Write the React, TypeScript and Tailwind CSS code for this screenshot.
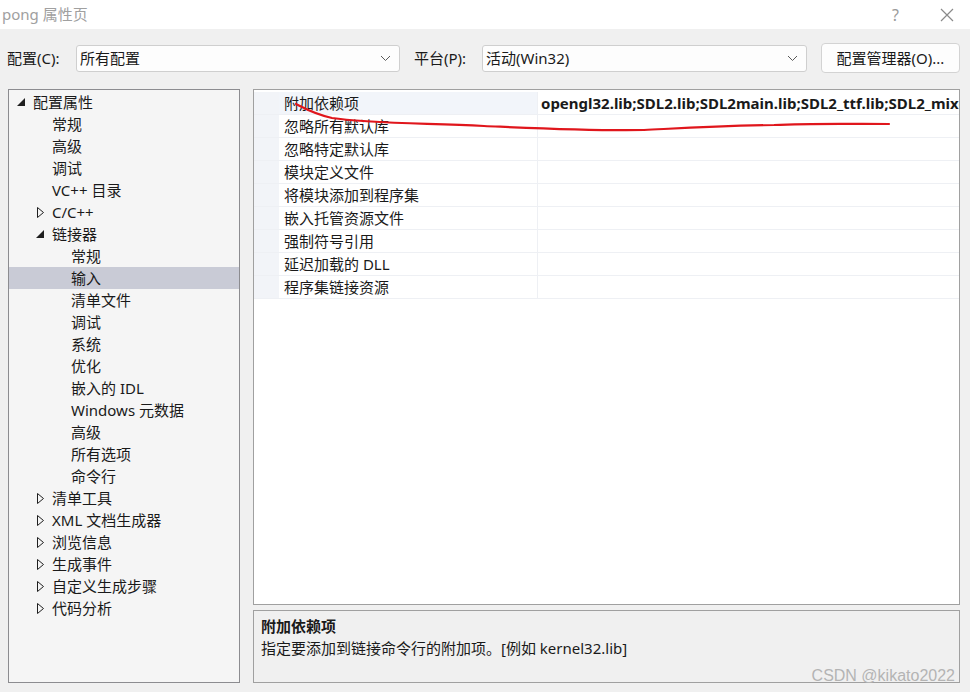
import React from 'react';

const font = { fontFamily: '"Noto Sans", "Noto Sans CJK SC", sans-serif' };

type TreeItem = { label: string; level: number; toggle?: 'open' | 'closed'; selected?: boolean };

const treeItems: TreeItem[] = [
  { label: '配置属性', level: 0, toggle: 'open' },
  { label: '常规', level: 1 },
  { label: '高级', level: 1 },
  { label: '调试', level: 1 },
  { label: 'VC++ 目录', level: 1 },
  { label: 'C/C++', level: 1, toggle: 'closed' },
  { label: '链接器', level: 1, toggle: 'open' },
  { label: '常规', level: 2 },
  { label: '输入', level: 2, selected: true },
  { label: '清单文件', level: 2 },
  { label: '调试', level: 2 },
  { label: '系统', level: 2 },
  { label: '优化', level: 2 },
  { label: '嵌入的 IDL', level: 2 },
  { label: 'Windows 元数据', level: 2 },
  { label: '高级', level: 2 },
  { label: '所有选项', level: 2 },
  { label: '命令行', level: 2 },
  { label: '清单工具', level: 1, toggle: 'closed' },
  { label: 'XML 文档生成器', level: 1, toggle: 'closed' },
  { label: '浏览信息', level: 1, toggle: 'closed' },
  { label: '生成事件', level: 1, toggle: 'closed' },
  { label: '自定义生成步骤', level: 1, toggle: 'closed' },
  { label: '代码分析', level: 1, toggle: 'closed' },
];

const props = [
  { name: '附加依赖项', value: 'opengl32.lib;SDL2.lib;SDL2main.lib;SDL2_ttf.lib;SDL2_mixer.lib;SDL2_image.lib' },
  { name: '忽略所有默认库', value: '' },
  { name: '忽略特定默认库', value: '' },
  { name: '模块定义文件', value: '' },
  { name: '将模块添加到程序集', value: '' },
  { name: '嵌入托管资源文件', value: '' },
  { name: '强制符号引用', value: '' },
  { name: '延迟加载的 DLL', value: '' },
  { name: '程序集链接资源', value: '' },
];

const Chevron = () => (
  <svg width="11" height="7" viewBox="0 0 11 7" className="shrink-0">
    <path d="M1 1 L5.5 5.5 L10 1" fill="none" stroke="#5a5a5a" strokeWidth="1" />
  </svg>
);

const Toggle = ({ kind }: { kind: 'open' | 'closed' }) =>
  kind === 'open' ? (
    <svg width="8" height="8" viewBox="0 0 8 8">
      <path d="M8 0 L8 8 L0 8 Z" fill="#1e1e1e" />
    </svg>
  ) : (
    <svg width="7" height="11" viewBox="0 0 7 11">
      <path d="M0.5 0.5 L6.5 5.5 L0.5 10.5 Z" fill="none" stroke="#1e1e1e" strokeWidth="1" />
    </svg>
  );

const Combo = ({ text, width }: { text: string; width: string }) => (
  <div className={`${width} h-[27px] bg-[#fdfdfd] border border-[#cfcfcf] rounded-[3px] flex items-center justify-between pl-[3px] pr-[8px]`}>
    <span className="text-[15px] text-[#1a1a1a] leading-none">{text}</span>
    <Chevron />
  </div>
);

export default function App() {
  return (
    <div className="w-[970px] h-[692px] bg-[#f0f0f0] relative overflow-hidden text-[#1a1a1a]" style={font}>
      {/* title bar */}
      <div className="h-[29px] bg-white flex items-center justify-between">
        <span className="pl-[2px] text-[15px] text-[#a0a0a0] leading-none">pong 属性页</span>
        <div className="flex items-center pr-[16px] gap-[41px] text-[#9a9a9a]">
          <span className="text-[16px] leading-none">?</span>
          <svg width="14" height="14" viewBox="0 0 14 14">
            <path d="M1 1 L13 13 M13 1 L1 13" stroke="#8a8a8a" strokeWidth="1.2" />
          </svg>
        </div>
      </div>

      {/* config row */}
      <div className="h-[60px] flex items-start pt-[14px] pl-[7px]">
        <div className="h-[30px] flex items-center">
          <span className="text-[15px] w-[69px] leading-none">配置(C):</span>
          <Combo text="所有配置" width="w-[324px]" />
          <span className="text-[15px] w-[68px] ml-[14px] leading-none">平台(P):</span>
          <Combo text="活动(Win32)" width="w-[325px]" />
          <div className="ml-[14px] w-[139px] h-[30px] bg-[#fdfdfd] border border-[#d3d3d3] rounded-[4px] flex items-center justify-center text-[15px] leading-none">
            配置管理器(O)...
          </div>
        </div>
      </div>

      {/* main */}
      <div className="flex pl-[8px] gap-[13px] h-[594px]">
        {/* tree */}
        <div className="w-[232px] h-[594px] border border-[#8c8c90] bg-[#f5f5f5] pt-[1px]">
          {treeItems.map((it, i) => (
            <div
              key={i}
              className={`h-[22px] flex items-center text-[15px] leading-none ${it.selected ? 'bg-[#c9cbd6]' : ''}`}
            >
              <div
                className={`flex items-center justify-end shrink-0 pr-[8px] ${
                  it.level === 0 ? 'w-[24px]' : it.level === 1 ? 'w-[43px]' : 'w-[62px]'
                }`}
              >
                {it.toggle && <Toggle kind={it.toggle} />}
              </div>
              <span className="whitespace-nowrap">{it.label}</span>
            </div>
          ))}
        </div>

        {/* right column */}
        <div className="w-[707px] flex flex-col gap-[5px]">
          <div className="relative h-[517px] border border-[#a0a0a0] bg-white pt-[2px]">
            {props.map((p, i) => (
              <div key={i} className="h-[23px] flex border-b border-[#eef0f4]">
                <div className="w-[25px] bg-[#f2f4f8] shrink-0" />
                <div
                  className={`w-[259px] shrink-0 flex items-center pl-[5px] text-[15px] leading-none border-r border-[#eef0f4] ${
                    i === 0 ? 'bg-[#f2f5fa]' : ''
                  }`}
                >
                  {p.name}
                </div>
                <div className="flex-1 min-w-0 overflow-hidden flex items-center pl-[3px] text-[15px] font-bold leading-none whitespace-nowrap">
                  {p.value}
                </div>
              </div>
            ))}
            {/* red annotation stroke */}
            <svg className="absolute left-0 top-0 pointer-events-none" width="707" height="60" viewBox="0 0 707 60">
              <path
                d="M42 14 C 50 18, 60 24, 78 28 C 110 33, 160 33, 230 36 C 300 39, 340 41, 390 40 C 430 38, 460 36, 520 35 C 560 33, 600 34, 635 34"
                fill="none"
                stroke="#e0161c"
                strokeWidth="2.2"
                strokeLinecap="round"
              />
            </svg>
          </div>
          <div className="h-[73px] border border-[#a0a0a0] bg-[#f0f0f0] pl-[7px] pt-[4px] relative">
            <div className="text-[15px] font-bold leading-[22px]">附加依赖项</div>
            <div className="text-[15px] leading-[22px]">指定要添加到链接命令行的附加项。[例如 kernel32.lib]</div>
            <span
              className="absolute right-[4px] bottom-[-2px] text-[16px] text-[#b4b4b4] leading-none"
              style={{ fontFamily: '"Liberation Sans", Arial, sans-serif' }}
            >
              CSDN @kikato2022
            </span>
          </div>
        </div>
      </div>
    </div>
  );
}
